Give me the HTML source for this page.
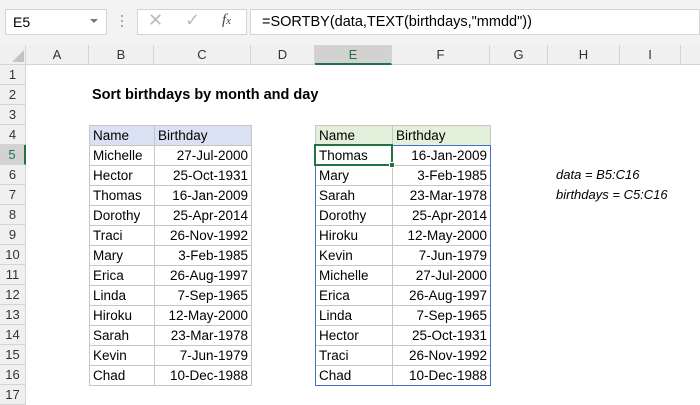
<!DOCTYPE html>
<html><head><meta charset="utf-8"><style>
*{margin:0;padding:0;box-sizing:border-box}
body{width:700px;height:400px;overflow:hidden;background:#fff;font-family:"Liberation Sans",Calibri,sans-serif;position:relative}
.a{position:absolute}
.top{left:0;top:0;width:700px;height:45px;background:#f3f3f3}
.box{background:#fff;border:1px solid #d4d4d4}
.ch{top:45px;height:20px;background:#f0f0f0;border-right:1px solid #d4d4d4;border-bottom:1px solid #d4d4d4;font-size:13px;text-align:center;line-height:19px;color:#333}
.rh{left:0;width:26px;height:20px;background:#f0f0f0;border-bottom:1px solid #d4d4d4;border-right:1px solid #d4d4d4;font-size:13px;text-align:center;line-height:20px;color:#333}
.c{height:20px;font-size:13.5px;line-height:20px;padding:0 3px;white-space:nowrap;color:#000}
table{position:absolute;border-collapse:collapse}
td{height:20px;font-size:13.5px;padding:0 3px;border:1px solid #c6c6c6;white-space:nowrap}
td.r{text-align:right}
</style></head><body>
<div class="a top"></div>
<div class="a box" style="left:5px;top:9px;width:102px;height:26px;font-size:14px;line-height:24px;padding-left:7px">E5<span style="position:absolute;right:8px;top:9px;border-left:4px solid transparent;border-right:4px solid transparent;border-top:4px solid #777"></span></div>
<div class="a" style="left:121px;top:15px;width:2px;height:2px;background:#aaa;box-shadow:0 5px #aaa,0 10px #aaa"></div>
<div class="a box" style="left:137px;top:9px;width:110px;height:26px"></div>
<div class="a" style="left:148px;top:10px;font-size:18px;color:#bbb">✕</div>
<div class="a" style="left:185px;top:10px;font-size:18px;color:#bbb">✓</div>
<div class="a" style="left:222px;top:12px;font-size:15px;font-style:italic;font-family:'Liberation Serif',serif;color:#444">f<span style="font-size:11px">x</span></div>
<div class="a box" style="left:250px;top:9px;width:450px;height:26px;font-size:14.5px;line-height:24px;padding-left:11px">=SORTBY(data,TEXT(birthdays,"mmdd"))</div>

<div class="a" style="left:0;top:45px;width:26px;height:20px;background:#f0f0f0;border-right:1px solid #d4d4d4;border-bottom:1px solid #d4d4d4"></div>
<div class="a" style="left:12px;top:50px;border-left:12px solid transparent;border-bottom:12px solid #c4c4c4"></div>
<div class="a ch" style="left:26px;width:63px">A</div>
<div class="a ch" style="left:89px;width:65px">B</div>
<div class="a ch" style="left:154px;width:97px">C</div>
<div class="a ch" style="left:251px;width:64px">D</div>
<div class="a ch" style="left:315px;width:77px;background:#d2d2d2;border-bottom:2px solid #217346;color:#217346">E</div>
<div class="a ch" style="left:392px;width:98px">F</div>
<div class="a ch" style="left:490px;width:58px">G</div>
<div class="a ch" style="left:548px;width:72px">H</div>
<div class="a ch" style="left:620px;width:61px">I</div>
<div class="a ch" style="left:681px;width:19px;border-right:none"></div>

<div class="a rh" style="top:65px">1</div>
<div class="a rh" style="top:85px">2</div>
<div class="a rh" style="top:105px">3</div>
<div class="a rh" style="top:125px">4</div>
<div class="a rh" style="top:145px;background:#d2d2d2;border-right:2px solid #217346;color:#217346">5</div>
<div class="a rh" style="top:165px">6</div>
<div class="a rh" style="top:185px">7</div>
<div class="a rh" style="top:205px">8</div>
<div class="a rh" style="top:225px">9</div>
<div class="a rh" style="top:245px">10</div>
<div class="a rh" style="top:265px">11</div>
<div class="a rh" style="top:285px">12</div>
<div class="a rh" style="top:305px">13</div>
<div class="a rh" style="top:325px">14</div>
<div class="a rh" style="top:345px">15</div>
<div class="a rh" style="top:365px">16</div>
<div class="a rh" style="top:385px">17</div>

<div class="a c" style="left:89px;top:85px;font-weight:bold;font-size:14.5px">Sort birthdays by month and day</div>

<table style="left:89px;top:125px">
<tr style="background:#d9e1f2"><td style="width:65px">Name</td><td style="width:97px">Birthday</td></tr>
<tr><td>Michelle</td><td class="r">27-Jul-2000</td></tr>
<tr><td>Hector</td><td class="r">25-Oct-1931</td></tr>
<tr><td>Thomas</td><td class="r">16-Jan-2009</td></tr>
<tr><td>Dorothy</td><td class="r">25-Apr-2014</td></tr>
<tr><td>Traci</td><td class="r">26-Nov-1992</td></tr>
<tr><td>Mary</td><td class="r">3-Feb-1985</td></tr>
<tr><td>Erica</td><td class="r">26-Aug-1997</td></tr>
<tr><td>Linda</td><td class="r">7-Sep-1965</td></tr>
<tr><td>Hiroku</td><td class="r">12-May-2000</td></tr>
<tr><td>Sarah</td><td class="r">23-Mar-1978</td></tr>
<tr><td>Kevin</td><td class="r">7-Jun-1979</td></tr>
<tr><td>Chad</td><td class="r">10-Dec-1988</td></tr>
</table>

<table style="left:315px;top:125px">
<tr style="background:#e2efda"><td style="width:77px">Name</td><td style="width:98px">Birthday</td></tr>
<tr><td>Thomas</td><td class="r">16-Jan-2009</td></tr>
<tr><td>Mary</td><td class="r">3-Feb-1985</td></tr>
<tr><td>Sarah</td><td class="r">23-Mar-1978</td></tr>
<tr><td>Dorothy</td><td class="r">25-Apr-2014</td></tr>
<tr><td>Hiroku</td><td class="r">12-May-2000</td></tr>
<tr><td>Kevin</td><td class="r">7-Jun-1979</td></tr>
<tr><td>Michelle</td><td class="r">27-Jul-2000</td></tr>
<tr><td>Erica</td><td class="r">26-Aug-1997</td></tr>
<tr><td>Linda</td><td class="r">7-Sep-1965</td></tr>
<tr><td>Hector</td><td class="r">25-Oct-1931</td></tr>
<tr><td>Traci</td><td class="r">26-Nov-1992</td></tr>
<tr><td>Chad</td><td class="r">10-Dec-1988</td></tr>
</table>
<div class="a" style="left:315px;top:145px;width:176px;height:241px;border:1px solid #3f6fc6"></div>
<div class="a" style="left:314px;top:144px;width:79px;height:22px;border:2px solid #217346"></div>
<div class="a" style="left:389px;top:162px;width:6px;height:6px;background:#217346;border:1px solid #fff"></div>

<div class="a c" style="left:553px;top:165px;font-style:italic;font-size:13px">data = B5:C16</div>
<div class="a c" style="left:553px;top:185px;font-style:italic;font-size:13px">birthdays = C5:C16</div>
</body></html>
